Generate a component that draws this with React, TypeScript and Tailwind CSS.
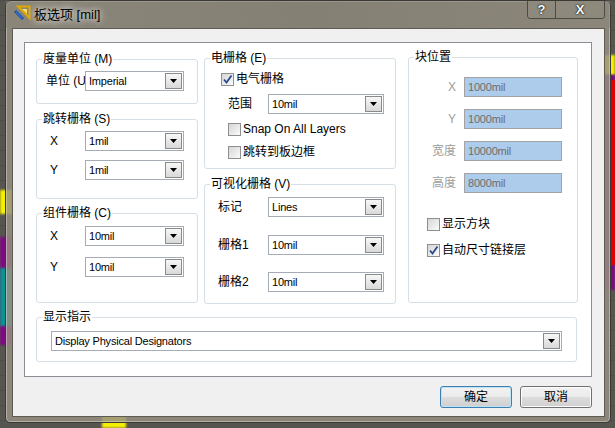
import React from "react";

const font = "font-['Liberation_Sans','Noto_Sans_CJK_SC',sans-serif]";

function Select({ value, className = "" }: { value: string; className?: string }) {
  return (
    <div className={`flex h-[20px] items-center border border-[#a5acb5] bg-white ${className}`}>
      <span className="flex-1 truncate pl-[3px] text-[11px] leading-[14px] tracking-[-0.2px] text-black">{value}</span>
      <span className="mr-[1px] flex h-[16px] w-[17px] items-center justify-center border border-[#8a8a8a] bg-gradient-to-b from-[#f7f7f7] to-[#d9d9d9]">
        <svg width="7" height="4" viewBox="0 0 7 4">
          <path d="M0 0h7L3.5 4z" fill="#000" />
        </svg>
      </span>
    </div>
  );
}

function Check({ checked, label }: { checked?: boolean; label: string }) {
  return (
    <div className="flex h-[16px] items-center">
      <span className="flex h-[13px] w-[13px] items-center justify-center border border-[#8e8f8f] bg-gradient-to-br from-[#d6d6d6] to-[#fbfbfb]">
        {checked && (
          <svg width="11" height="11" viewBox="0 0 11 11">
            <path d="M2 5.5 L4.5 8.5 L9.5 1.5" fill="none" stroke="#2b4a8c" strokeWidth="1.8" />
          </svg>
        )}
      </span>
      <span className="ml-[2px] whitespace-nowrap text-[12px] leading-[16px] text-black">{label}</span>
    </div>
  );
}

function Group({ title, className = "", children }: { title: string; className?: string; children?: React.ReactNode }) {
  return (
    <div className={`relative rounded-[3px] border border-[#d5dfe5] ${className}`}>
      <span className="absolute left-[5px] top-[-9px] whitespace-nowrap bg-white px-[1px] text-[12px] leading-[16px] text-black">
        {title}
      </span>
      {children}
    </div>
  );
}

function Field({ label, value, className = "" }: { label: string; value: string; className?: string }) {
  return (
    <div className={`flex items-center ${className}`}>
      <span className="w-[47px] text-right text-[12px] leading-[16px] text-[#9d9d9d]">{label}</span>
      <div className="ml-[8px] flex h-[20px] w-[98px] items-center border border-[#a3a3a3] bg-[#adcbea] pl-[3px] text-[11px] tracking-[-0.2px] text-[#6d6d6d]">
        {value}
      </div>
    </div>
  );
}

export default function App() {
  return (
    <div className={`relative h-[428px] w-[615px] overflow-hidden bg-[#57554f] ${font}`}>
      {/* canvas behind the dialog */}
      <div className="absolute inset-0 bg-[linear-gradient(#4a4844_1px,transparent_1px)] bg-[length:100%_15px] opacity-60" />
      <div className="absolute left-0 top-[190px] h-[24px] w-[12px] bg-[#f4f000] blur-[1px]" />
      <div className="absolute left-0 top-[237px] h-[108px] w-[12px] bg-[#7e0a82] blur-[1px]" />
      <div className="absolute left-0 top-[268px] h-[58px] w-[12px] bg-[#0a9490] blur-[1px]" />
      <div className="absolute right-0 top-[55px] h-[20px] w-[12px] bg-[#f4f000] blur-[1px]" />
      <div className="absolute right-0 top-[75px] h-[215px] w-[12px] bg-[#7e0a82] blur-[1px]" />
      <div className="absolute right-0 top-[80px] h-[185px] w-[4px] bg-[#e00000]" />
      <div className="absolute left-[102px] top-[414px] h-[14px] w-[24px] bg-[#f4f000] blur-[1px]" />

      {/* dialog window */}
      <div className="relative ml-[5px] flex h-[423px] w-[606px] flex-col rounded-t-[7px] rounded-b-[5px] border border-[#3a3934] bg-[#969183]/85 shadow-[inset_0_0_0_1px_rgba(255,255,255,0.35)]">
        {/* title bar */}
        <div className="flex h-[27px] items-start bg-gradient-to-r from-[#8a8578]/60 via-[#7d796e]/50 to-[#8b8679]/60">
          <svg className="ml-[7px] mt-[4px]" width="18" height="18" viewBox="0 0 18 18">
            <path d="M5 1.5 H16.5 V13 Z" fill="none" stroke="#e0a800" strokeWidth="2" />
            <path d="M9 4 H14 V9 Z" fill="#f6dc6a" />
            <path d="M1.5 7 L3 5.5 L10.5 13 L9 14.5 Z" fill="#2b72d6" stroke="#0b3f8c" strokeWidth="0.8" />
          </svg>
          <span className="ml-[3px] mt-[6px] text-[13px] leading-[16px] text-black [text-shadow:0_0_6px_rgba(255,255,255,0.9),0_0_10px_rgba(255,255,255,0.6)]">
            板选项 [mil]
          </span>
          <div className="ml-auto mr-[5px] flex h-[18px] overflow-hidden rounded-b-[4px] border border-t-0 border-[#4c4a44] shadow-[inset_0_0_0_1px_rgba(255,255,255,0.25)]">
            <span className="flex w-[28px] items-center justify-center border-r border-[#4c4a44] bg-[#8d897d] text-[13px] font-bold leading-none text-white [text-shadow:0_0_1px_#000,0_0_2px_#000]">
              ?
            </span>
            <span className="flex w-[48px] items-center justify-center bg-[#8d897d] text-[13px] font-bold leading-none text-white [text-shadow:0_0_1px_#000,0_0_2px_#000]">
              X
            </span>
          </div>
        </div>

        {/* client area */}
        <div className="mb-[5px] ml-[6px] mr-[5px] flex flex-1 flex-col border border-[#5e5b54] bg-[#f0f0f0]">
          <div className="ml-[11px] mt-[13px] flex h-[335px] w-[568px] flex-col border border-[#8b8d94] bg-white pl-[11px]">
            <div className="mt-[14px] flex">
              {/* left column */}
              <div className="flex w-[162px] flex-col">
                <Group title="度量单位 (M)" className="mt-[2px] h-[45px]">
                  <div className="ml-[9px] mt-[11px] flex items-center">
                    <span className="w-[39px] whitespace-nowrap text-[12px] leading-[16px]">单位 (U</span>
                    <Select value="Imperial" className="w-[99px]" />
                  </div>
                </Group>
                <Group title="跳转栅格 (S)" className="mt-[15px] h-[80px]">
                  <div className="ml-[13px] mt-[11px] flex items-center">
                    <span className="w-[35px] text-[12px] leading-[16px]">X</span>
                    <Select value="1mil" className="w-[99px]" />
                  </div>
                  <div className="ml-[13px] mt-[9px] flex items-center">
                    <span className="w-[35px] text-[12px] leading-[16px]">Y</span>
                    <Select value="1mil" className="w-[99px]" />
                  </div>
                </Group>
                <Group title="组件栅格 (C)" className="mt-[14px] h-[90px]">
                  <div className="ml-[13px] mt-[12px] flex items-center">
                    <span className="w-[35px] text-[12px] leading-[16px]">X</span>
                    <Select value="10mil" className="w-[99px]" />
                  </div>
                  <div className="ml-[13px] mt-[11px] flex items-center">
                    <span className="w-[35px] text-[12px] leading-[16px]">Y</span>
                    <Select value="10mil" className="w-[99px]" />
                  </div>
                </Group>
              </div>

              {/* middle column */}
              <div className="ml-[6px] flex w-[192px] flex-col">
                <Group title="电栅格 (E)" className="mt-[1px] h-[111px]">
                  <div className="ml-[16px] mt-[12px]">
                    <Check checked label="电气栅格" />
                  </div>
                  <div className="ml-[23px] mt-[7px] flex items-center">
                    <span className="w-[40px] text-[12px] leading-[16px]">范围</span>
                    <Select value="10mil" className="w-[116px]" />
                  </div>
                  <div className="ml-[23px] mt-[7px]">
                    <Check label="Snap On All Layers" />
                  </div>
                  <div className="ml-[23px] mt-[7px]">
                    <Check label="跳转到板边框" />
                  </div>
                </Group>
                <Group title="可视化栅格 (V)" className="mt-[15px] h-[120px]">
                  <div className="ml-[13px] mt-[12px] flex items-center">
                    <span className="w-[50px] text-[12px] leading-[16px]">标记</span>
                    <Select value="Lines" className="w-[116px]" />
                  </div>
                  <div className="ml-[13px] mt-[18px] flex items-center">
                    <span className="w-[50px] text-[12px] leading-[16px]">栅格1</span>
                    <Select value="10mil" className="w-[116px]" />
                  </div>
                  <div className="ml-[13px] mt-[17px] flex items-center">
                    <span className="w-[50px] text-[12px] leading-[16px]">栅格2</span>
                    <Select value="10mil" className="w-[116px]" />
                  </div>
                </Group>
              </div>

              {/* right column */}
              <Group title="块位置" className="ml-[12px] h-[246px] w-[170px]">
                <Field label="X" value="1000mil" className="mt-[19px]" />
                <Field label="Y" value="1000mil" className="mt-[12px]" />
                <Field label="宽度" value="10000mil" className="mt-[12px]" />
                <Field label="高度" value="8000mil" className="mt-[12px]" />
                <div className="ml-[18px] mt-[23px]">
                  <Check label="显示方块" />
                </div>
                <div className="ml-[18px] mt-[10px]">
                  <Check checked label="自动尺寸链接层" />
                </div>
              </Group>
            </div>

            <Group title="显示指示" className="mt-[13px] h-[45px] w-[541px]">
              <div className="ml-[14px] mt-[13px]">
                <Select value="Display Physical Designators" className="w-[511px]" />
              </div>
            </Group>
          </div>

          {/* buttons */}
          <div className="mr-[12px] mt-[9px] flex justify-end gap-[8px]">
            <button className="h-[22px] w-[72px] rounded-[3px] border border-[#3c7fb1] bg-[linear-gradient(#f2f2f2_0%,#ebebeb_50%,#dddddd_50%,#cfcfcf_100%)] text-[12px] leading-[16px] text-black shadow-[inset_0_0_0_1px_#bde3f7]">
              确定
            </button>
            <button className="h-[22px] w-[72px] rounded-[3px] border border-[#707070] bg-[linear-gradient(#f2f2f2_0%,#ebebeb_50%,#dddddd_50%,#cfcfcf_100%)] text-[12px] leading-[16px] text-black shadow-[inset_0_0_0_1px_#fcfcfc]">
              取消
            </button>
          </div>
        </div>
      </div>
    </div>
  );
}
